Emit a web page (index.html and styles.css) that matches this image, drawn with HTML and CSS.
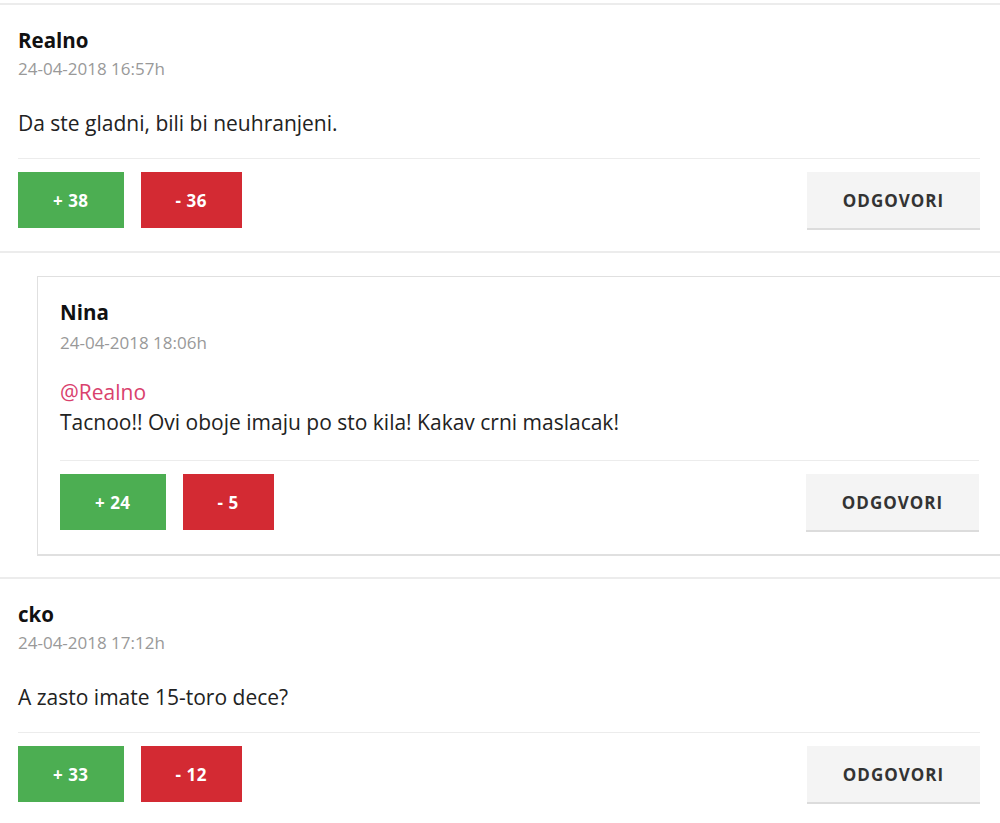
FILE: index.html
```html
<!DOCTYPE html>
<html lang="sr">
<head>
    <meta charset="UTF-8">
    <title>Komentari</title>
    <link rel="stylesheet" href="styles.css">
</head>
<body>
    <div class="comments">
        <div class="comment">
            <div class="author">Realno</div>
            <div class="date">24-04-2018 16:57h</div>
            <p class="text">Da ste gladni, bili bi neuhranjeni.</p>
            <div class="actions">
                <button class="vote up">+ 38</button>
                <button class="vote down">- 36</button>
                <button class="reply-btn">ODGOVORI</button>
            </div>
        </div>

        <div class="comment reply">
            <div class="author">Nina</div>
            <div class="date">24-04-2018 18:06h</div>
            <p class="text"><span class="mention">@Realno</span><br>Tacnoo!! Ovi oboje imaju po sto kila! Kakav crni maslacak!</p>
            <div class="actions">
                <button class="vote up">+ 24</button>
                <button class="vote down">- 5</button>
                <button class="reply-btn">ODGOVORI</button>
            </div>
        </div>

        <div class="comment">
            <div class="author">cko</div>
            <div class="date">24-04-2018 17:12h</div>
            <p class="text">A zasto imate 15-toro dece?</p>
            <div class="actions">
                <button class="vote up">+ 33</button>
                <button class="vote down">- 12</button>
                <button class="reply-btn">ODGOVORI</button>
            </div>
        </div>
    </div>
</body>
</html>
```

FILE: styles.css
```css
body {
    margin: 0;
    padding: 3px 0 0;
    font-family: "Open Sans", "Liberation Sans", sans-serif;
    background: #fff;
    color: #222;
    overflow-x: hidden;
}
.comment {
    border-top: 2px solid #ececec;
    border-bottom: 2px solid #ececec;
    padding: 22px 20px 23px 18px;
}
.author {
    font-size: 20.5px;
    font-weight: bold;
    line-height: 26px;
    color: #111;
}
.date {
    margin-top: 6px;
    font-size: 17px;
    line-height: 20px;
    color: #999;
}
.text {
    margin: 29px 0 0;
    font-size: 21px;
    line-height: 30px;
    color: #222;
}
.mention {
    color: #d9416d;
}
.actions {
    display: flex;
    align-items: flex-start;
    margin-top: 20px;
    padding-top: 13px;
    border-top: 1px solid #ececec;
}
.vote {
    height: 56px;
    padding: 0 35px;
    border: none;
    font-family: inherit;
    font-size: 17px;
    font-weight: bold;
    letter-spacing: 0.5px;
    color: #fff;
    margin-right: 17px;
}
.vote.up {
    background-color: #4cae52;
}
.vote.down {
    background-color: #d32a33;
}
.reply-btn {
    margin-left: auto;
    width: 173px;
    height: 56px;
    border: none;
    background-color: #f4f4f4;
    box-shadow: 0 2px 0 #dcdcdc;
    font-family: inherit;
    font-size: 17px;
    font-weight: bold;
    letter-spacing: 1px;
    color: #333;
}
/* odgovor na komentar */
.comment.reply {
    margin: 23px -2px 21px 37px;
    border: 1px solid #e0e0e0;
    border-bottom-width: 2px;
    padding: 22px 22px 24px 22px;
}
.comment.reply .date {
    margin-top: 8px;
}
.comment.reply .text {
    margin-top: 24px;
}
.comment.reply .actions {
    margin-top: 23px;
}
```
